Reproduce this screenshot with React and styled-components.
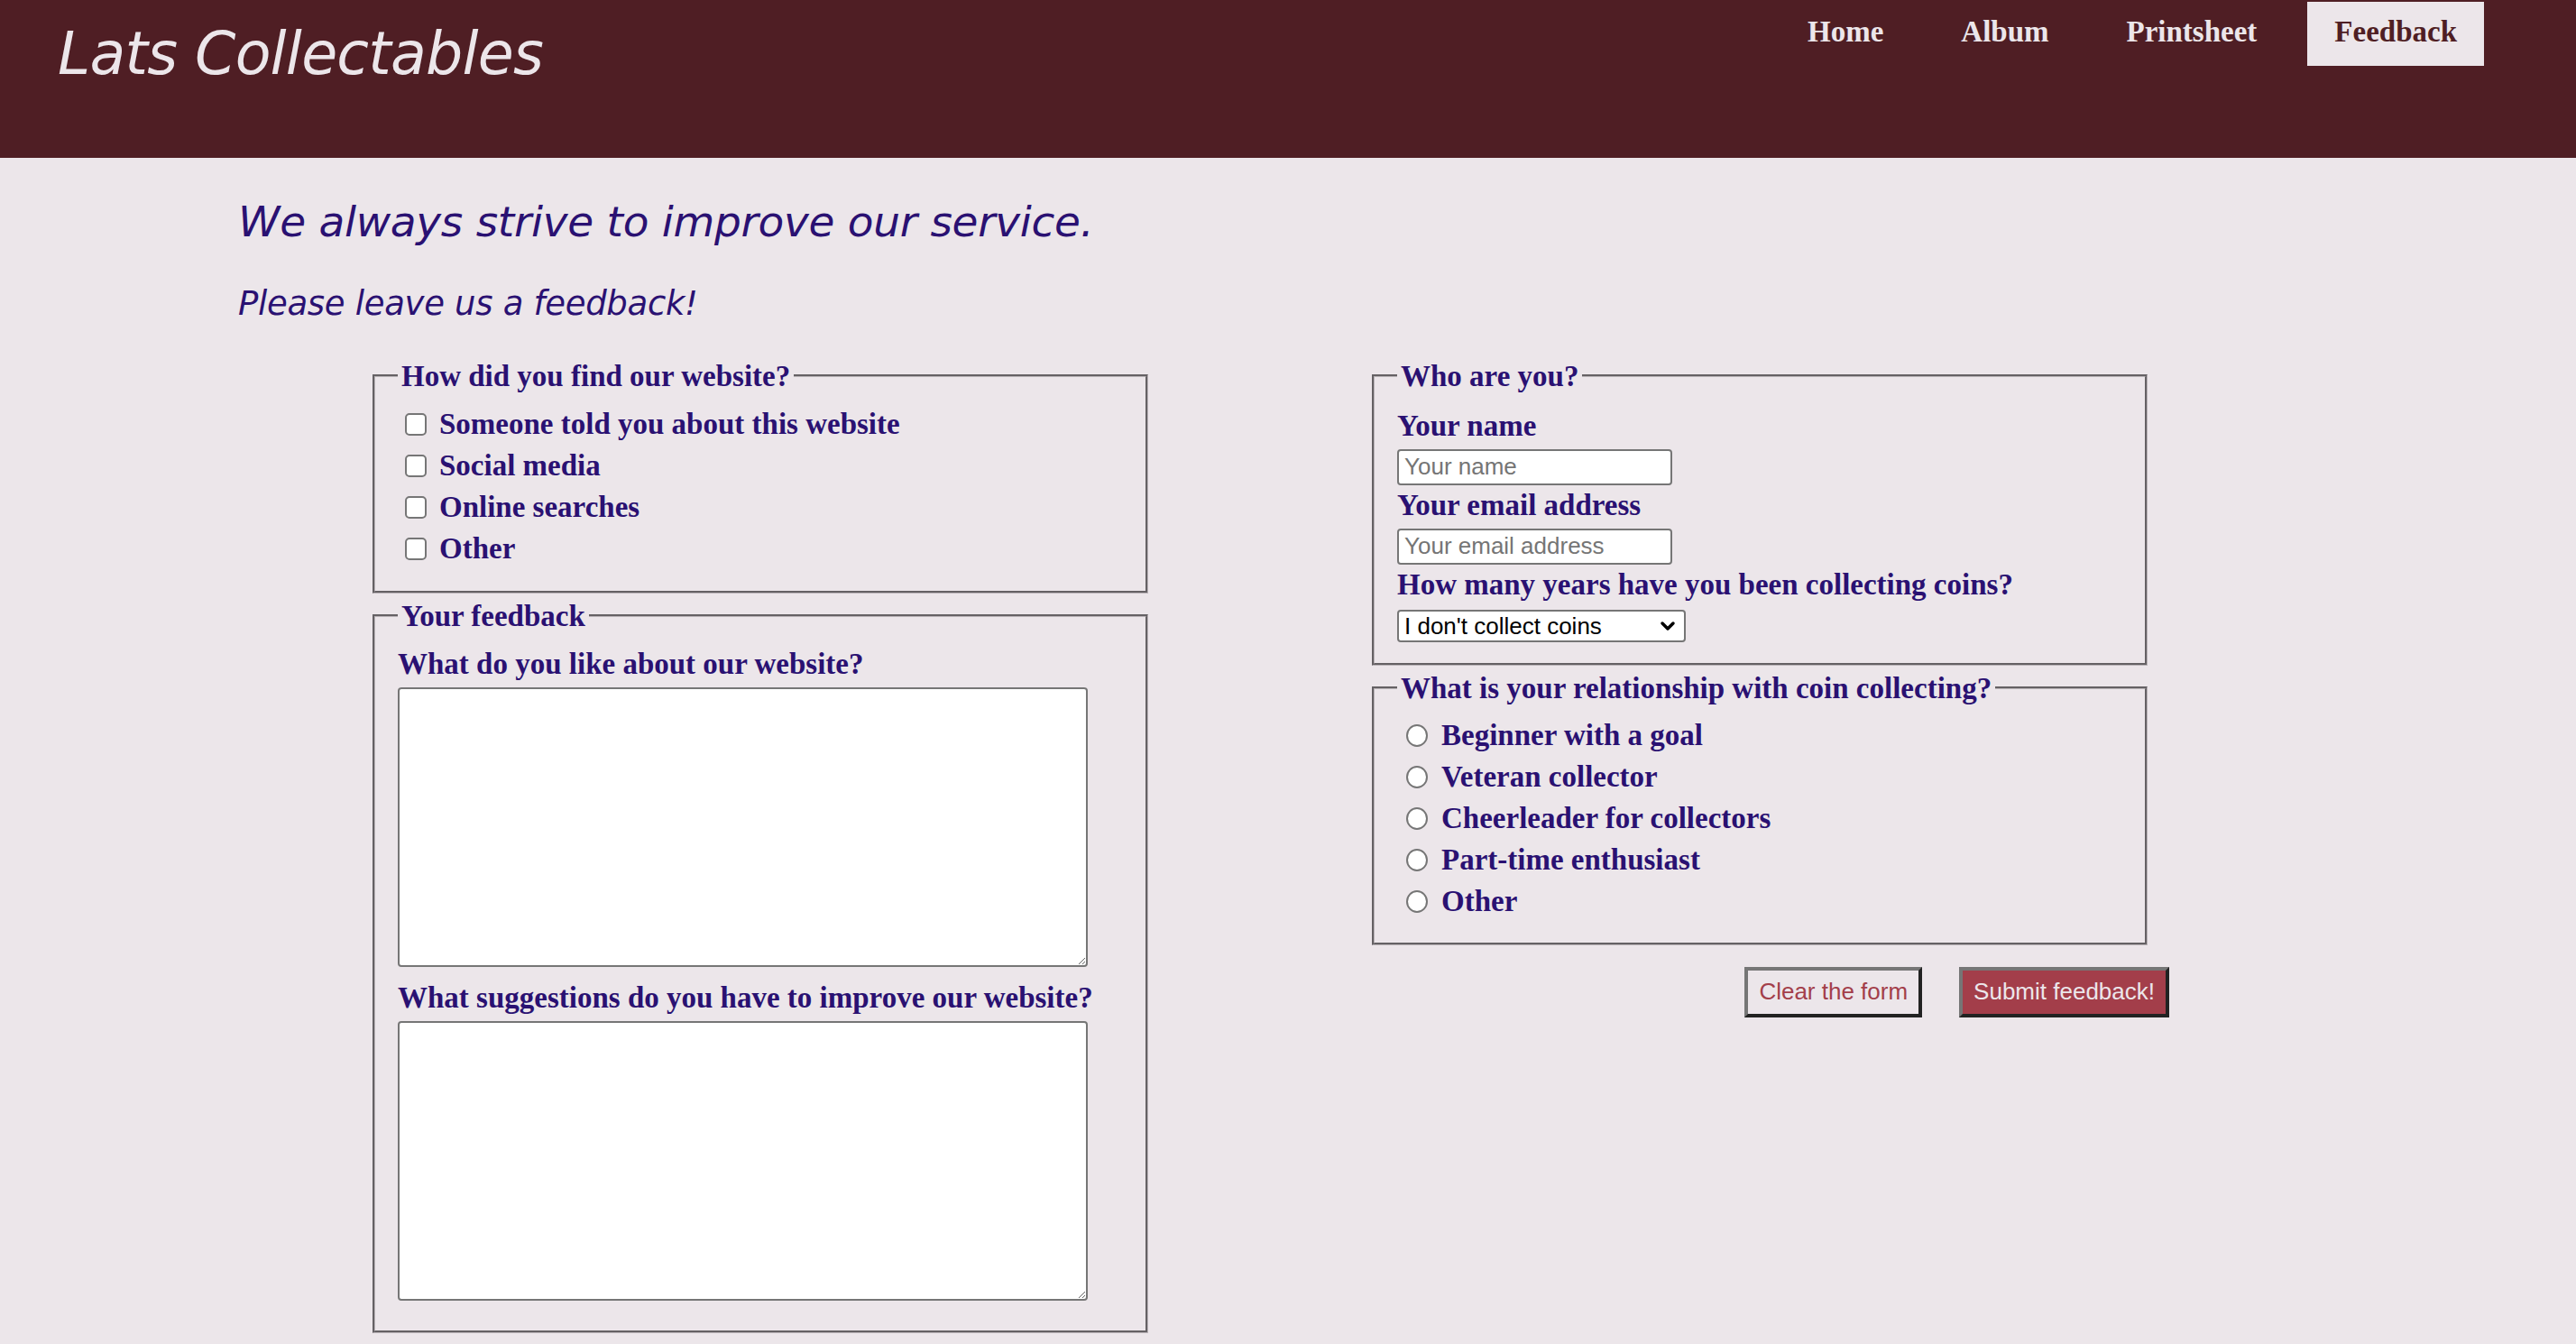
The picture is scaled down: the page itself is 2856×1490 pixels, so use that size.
import React from 'react';
import styled, { createGlobalStyle } from 'styled-components';
import { ChevronDown } from 'lucide-react';

const GlobalStyle = createGlobalStyle`
  html, body {
    margin: 0;
    padding: 0;
    background-color: #ece6ea;
  }
  * {
    box-sizing: border-box;
  }
`;

const PageContainer = styled.div`
  min-height: 100vh;
  background-color: #ece6ea;
  color: #2a1172;
  font-family: "Liberation Serif", serif;
`;

const Header = styled.header`
  height: 175px;
  background-color: #4f1e24;
  display: flex;
  justify-content: space-between;
  align-items: flex-start;
  padding: 0 102px 0 64px;
`;

const Logo = styled.h1`
  margin: 21px 0 0;
  font-family: "DejaVu Sans", Lato, sans-serif;
  font-style: oblique;
  font-weight: 400;
  font-size: 65px;
  line-height: 1.2;
  letter-spacing: -0.8px;
  color: #ece6ea;
`;

const Nav = styled.nav`
  display: flex;
  gap: 26px;
  margin-top: 2px;
`;

const NavLink = styled.a`
  display: block;
  padding: 13px 30px 18px;
  font-family: "Liberation Serif", serif;
  font-weight: 700;
  font-size: 33px;
  line-height: 40px;
  text-decoration: none;
  color: ${props => (props.active ? '#4f1e24' : '#ece6ea')};
  background-color: ${props => (props.active ? '#ece6ea' : 'transparent')};
  cursor: pointer;
`;

const MainContent = styled.main`
  padding: 43px 0 13px 264px;
`;

const Lead = styled.h2`
  margin: 0;
  font-family: "DejaVu Sans", Lato, sans-serif;
  font-style: oblique;
  font-weight: 400;
  font-size: ${props => props.size}px;
  line-height: 1.2;
  letter-spacing: -0.3px;
  color: #2a1172;
  margin-top: ${props => props.top || 0}px;
`;

const FormGrid = styled.form`
  display: grid;
  grid-template-columns: 860px 860px;
  column-gap: 248px;
  margin: 38px 0 0 149px;
  align-items: start;
`;

const Column = styled.div`
  display: flex;
  flex-direction: column;
`;

const Fieldset = styled.fieldset`
  margin: ${props => (props.first ? 0 : 6)}px 0 0;
  border: 3px groove #b9b3b7;
  padding: ${props => props.pad};
  min-width: 0;
`;

const Legend = styled.legend`
  padding: 0 4px;
  font-weight: 700;
  font-size: 33px;
  line-height: 38px;
  color: #2a1172;
`;

const OptionRow = styled.label`
  display: flex;
  align-items: center;
  height: 46px;
  font-weight: 700;
  font-size: 33px;
  color: #2a1172;
  cursor: pointer;
`;

const Check = styled.input`
  appearance: none;
  width: 24px;
  height: 25px;
  margin: 0 ${props => props.gap}px 0 ${props => props.indent}px;
  flex: none;
  background: #fff;
  border: 2px solid #767676;
  border-radius: ${props => (props.type === 'radio' ? '50%' : '5px')};
  cursor: pointer;

  &:checked {
    background: #2a1172;
    box-shadow: inset 0 0 0 4px #fff;
  }
`;

const FieldLabel = styled.label`
  display: block;
  font-weight: 700;
  font-size: 33px;
  line-height: 38px;
  color: #2a1172;
  margin-top: ${props => props.top || 0}px;
`;

const TextArea = styled.textarea`
  display: block;
  width: 765px;
  height: 310px;
  margin: 7px 0 0;
  background: #fff;
  border: 2px solid #767676;
  border-radius: 4px;
  font-family: "Liberation Mono", monospace;
  font-size: 20px;
`;

const TextInput = styled.input`
  display: block;
  width: 305px;
  height: 40px;
  margin: 7px 0 0;
  padding: 0 6px;
  background: #fff;
  border: 2px solid #767676;
  border-radius: 4px;
  font-family: "Liberation Sans", Arial, sans-serif;
  font-size: 26px;
  color: #000;

  &::placeholder {
    color: #757575;
  }
`;

const SelectWrap = styled.div`
  position: relative;
  width: 320px;
  margin: 9px 0 0;
`;

const Select = styled.select`
  appearance: none;
  display: block;
  width: 100%;
  height: 36px;
  padding: 0 34px 0 6px;
  background: #fff;
  border: 2px solid #767676;
  border-radius: 4px;
  font-family: "Liberation Sans", Arial, sans-serif;
  font-size: 26px;
  color: #000;
`;

const SelectArrow = styled.span`
  position: absolute;
  right: 8px;
  top: 50%;
  transform: translateY(-50%);
  display: flex;
  pointer-events: none;
  color: #000;
`;

const ButtonRow = styled.div`
  display: flex;
  justify-content: flex-end;
  gap: 41px;
  margin: 24px -24px 0 0;
`;

const Button = styled.button`
  height: 56px;
  padding: 0 12px;
  font-family: "Liberation Sans", Arial, sans-serif;
  font-size: 26px;
  border-style: solid;
  border-width: 4px;
  border-color: #767676 #222 #222 #767676;
  color: ${props => (props.primary ? '#ece6ea' : '#a33e4a')};
  background-color: ${props => (props.primary ? '#a33e4a' : '#ece6ea')};
  cursor: pointer;
`;

const findOptions = [
  'Someone told you about this website',
  'Social media',
  'Online searches',
  'Other',
];

const relationOptions = [
  'Beginner with a goal',
  'Veteran collector',
  'Cheerleader for collectors',
  'Part-time enthusiast',
  'Other',
];

const navItems = ['Home', 'Album', 'Printsheet', 'Feedback'];

export default function App() {
  return (
    <PageContainer>
      <GlobalStyle />

      {/* Header */}
      <Header>
        <Logo>Lats Collectables</Logo>
        <Nav>
          {navItems.map(item => (
            <NavLink key={item} active={item === 'Feedback'}>
              {item}
            </NavLink>
          ))}
        </Nav>
      </Header>

      {/* Main Content */}
      <MainContent>
        <Lead size={47}>We always strive to improve our service.</Lead>
        <Lead size={37} top={41}>Please leave us a feedback!</Lead>

        <FormGrid onSubmit={e => e.preventDefault()}>
          <Column>
            <Fieldset first pad="12px 25px 23px">
              <Legend>How did you find our website?</Legend>
              {findOptions.map(opt => (
                <OptionRow key={opt}>
                  <Check type="checkbox" indent={8} gap={14} />
                  {opt}
                </OptionRow>
              ))}
            </Fieldset>

            <Fieldset pad="15px 25px 33px">
              <Legend>Your feedback</Legend>
              <FieldLabel htmlFor="likes">What do you like about our website?</FieldLabel>
              <TextArea id="likes" />
              <FieldLabel htmlFor="suggestions" top={15}>
                What suggestions do you have to improve our website?
              </FieldLabel>
              <TextArea id="suggestions" />
            </Fieldset>
          </Column>

          <Column>
            <Fieldset first pad="17px 25px 23px">
              <Legend>Who are you?</Legend>
              <FieldLabel htmlFor="name">Your name</FieldLabel>
              <TextInput id="name" placeholder="Your name" />
              <FieldLabel htmlFor="email" top={3}>Your email address</FieldLabel>
              <TextInput id="email" type="email" placeholder="Your email address" />
              <FieldLabel htmlFor="years" top={3}>
                How many years have you been collecting coins?
              </FieldLabel>
              <SelectWrap>
                <Select id="years" defaultValue="none">
                  <option value="none">I don't collect coins</option>
                  <option value="1">Less than a year</option>
                  <option value="5">1 - 5 years</option>
                  <option value="10">More than 5 years</option>
                </Select>
                <SelectArrow>
                  <ChevronDown size={24} strokeWidth={3.5} />
                </SelectArrow>
              </SelectWrap>
            </Fieldset>

            <Fieldset pad="11px 25px 22px">
              <Legend>What is your relationship with coin collecting?</Legend>
              {relationOptions.map(opt => (
                <OptionRow key={opt}>
                  <Check type="radio" name="relation" indent={10} gap={15} />
                  {opt}
                </OptionRow>
              ))}
            </Fieldset>

            <ButtonRow>
              <Button type="reset">Clear the form</Button>
              <Button type="submit" primary>Submit feedback!</Button>
            </ButtonRow>
          </Column>
        </FormGrid>
      </MainContent>
    </PageContainer>
  );
}
